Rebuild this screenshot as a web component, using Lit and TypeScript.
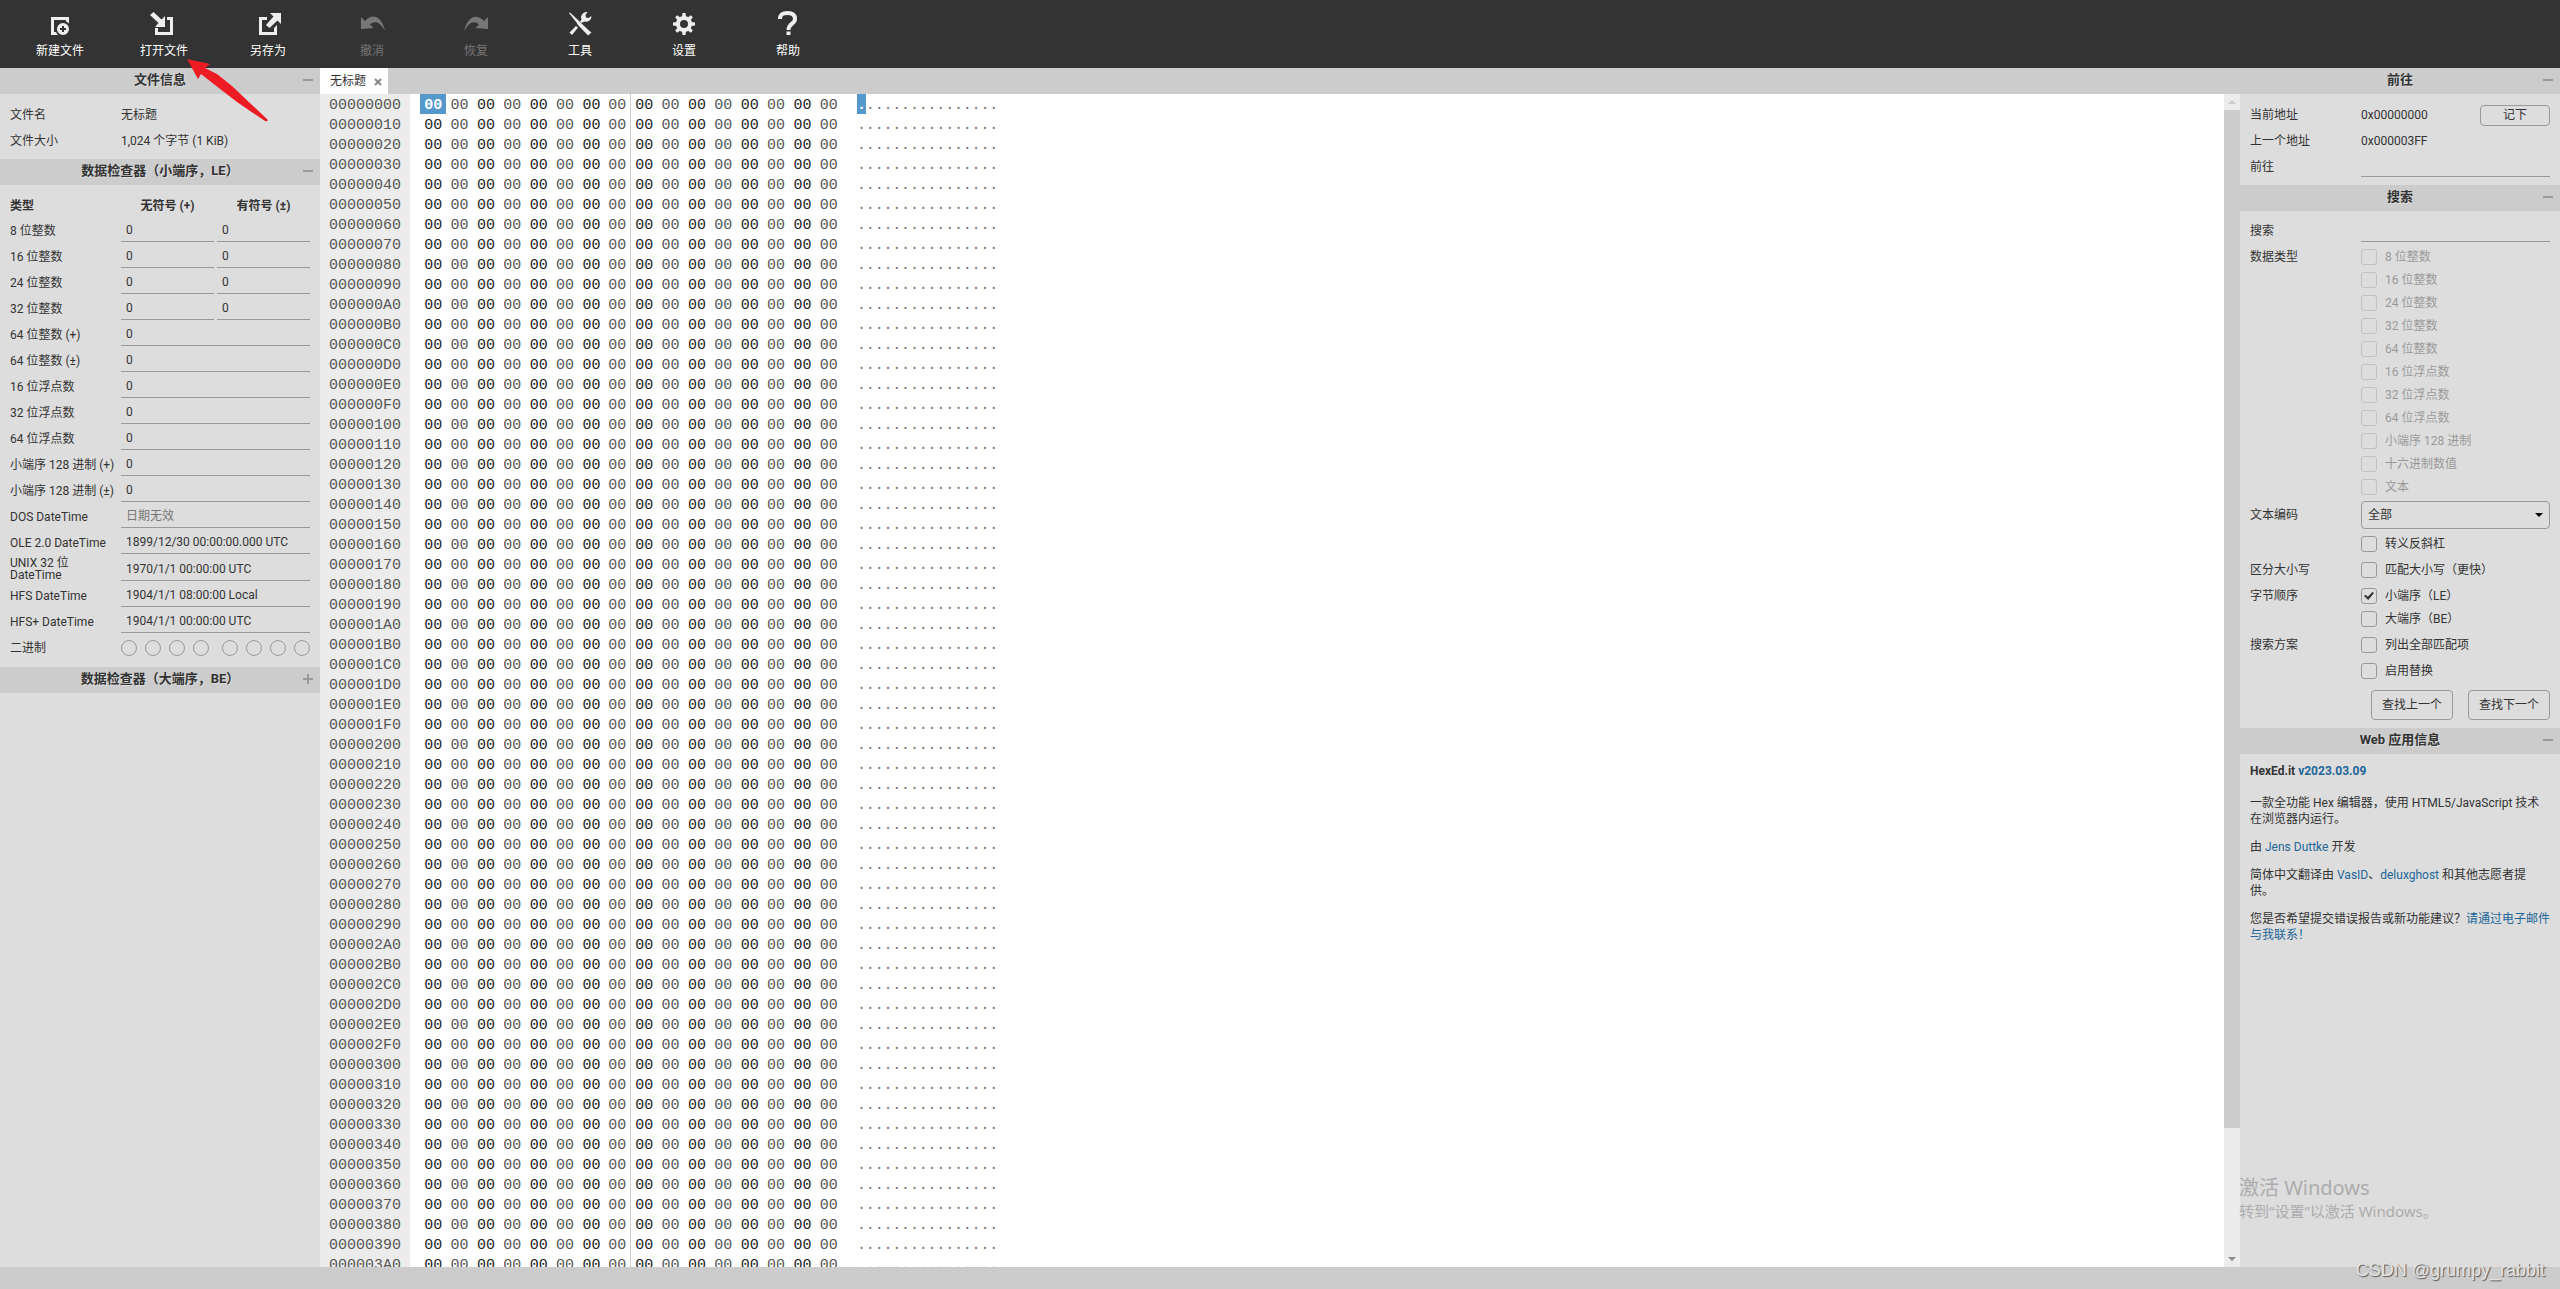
import { LitElement, html, svg, css, nothing, type TemplateResult } from "lit";
import { customElement, property } from "lit/decorators.js";
import { classMap } from "lit/directives/class-map.js";

/* ---------- shared styles ---------- */

const base = css`
  *,
  *::before,
  *::after {
    box-sizing: border-box;
  }
  button,
  input,
  select {
    font: inherit;
    color: inherit;
    margin: 0;
  }
  a {
    color: #269;
    text-decoration: none;
  }
`;

const fields = css`
  .line {
    display: block;
    width: 100%;
    height: 23px;
    padding: 0 5px;
    border: 0;
    border-bottom: 1px solid #999;
    border-radius: 0;
    background: transparent;
    outline: none;
  }
  .line::placeholder {
    color: #777;
    opacity: 1;
  }
  .box {
    appearance: none;
    flex: none;
    width: 16px;
    height: 16px;
    border: 1px solid #999;
    border-radius: 3px;
    background: transparent;
    display: grid;
    place-items: center;
  }
  .box:checked::before {
    content: "";
    width: 10px;
    height: 8px;
    background: #333;
    clip-path: polygon(0 50%, 16% 34%, 38% 58%, 84% 0, 100% 14%, 42% 100%);
  }
  .box.round {
    border-radius: 50%;
  }
`;

/* ---------- icons ---------- */

const icons: Record<string, TemplateResult> = {
  create: svg`
    <path d="M3 5h18v6.500a8 8 0 0 0-3-2V8H6v12h2a8 8 0 0 0 2 3H3z"/>
    <path fill-rule="evenodd" d="M15 11a6 6 0 1 1 0 12a6 6 0 1 1 0-12zM14 14v2h-2v2h2v2h2v-2h2v-2h-2v-2z"/>`,
  open: svg`
    <path d="M15 5h6v18H3v-7h3v4h12V8h-3z"/>
    <path d="M-2 3L1.500 0L9.500 7.500L13 4v11H3l3.500-4z"/>`,
  save: svg`
    <path d="M3 5h8v3H6v12h12v-4l3-3v10H3z"/>
    <path d="M14 1h11v11l-3.500-3.500L13.500 16L10 13l7.500-8.500z"/>`,
  undo: svg`<path d="M1 5L5 9C11 2 21 2 25 18.500C20 10 15 8 10 12.500L13.500 16L1 17z"/>`,
  redo: svg`<path d="M24 5L20 9C14 2 4 2 0 19.500C5 10 10 8 15 12.500L11.500 16L24 17z"/>`,
  tools: svg`
    <path d="M1 1L2 .500L10.500 8.500L13 11L21.500 19L23.500 20.500L20 23.500L10 13L8.500 10.500z"/>
    <path d="M10 15.500L4 23L1.500 20.500L8 14zM13.500 11L12 9.500L13.500 7.500A5.500 5.500 0 0 1 19.500 0L17.500 3L18 5.500L20.500 6L23.500 4A5.500 5.500 0 0 1 16.500 9.500z"/>`,
  settings: svg`
    <path fill-rule="evenodd" d="M12 4a8 8 0 1 1 0 16a8 8 0 1 1 0-16zM12 8a4 4 0 1 0 0 8a4 4 0 1 0 0-8z"/>
    ${[0, 45, 90, 135, 180, 225, 270, 315].map(
      (a) => svg`<path transform="rotate(${a} 12 12)" d="M10 5L10.500 1h3L14 5z"/>`
    )}`,
  help: svg`
    <path fill="none" stroke="currentColor" stroke-width="4" d="M4 7C4 2 7 1 11.500 1C16 1 19 3 19 7C19 12 12.500 11.500 12.500 18"/>
    <path d="M10.500 19.500h4v3.500h-4z"/>`,
};

/* ---------- toolbar ---------- */

const TOOLS = [
  { icon: "create", text: "新建文件" },
  { icon: "open", text: "打开文件" },
  { icon: "save", text: "另存为" },
  { icon: "undo", text: "撤消", disabled: true },
  { icon: "redo", text: "恢复", disabled: true },
  { icon: "tools", text: "工具" },
  { icon: "settings", text: "设置" },
  { icon: "help", text: "帮助" },
];

@customElement("hex-toolbar")
class HexToolbar extends LitElement {
  static styles = [
    base,
    css`
      :host {
        display: block;
        background: #333;
      }
      .bar {
        display: flex;
        padding: 0 8px;
      }
      .tool {
        width: 104px;
        height: 68px;
        padding: 12px 0 0;
        display: flex;
        flex-direction: column;
        align-items: center;
        justify-content: flex-start;
        gap: 7px;
        border: 0;
        background: none;
        color: #fff;
        line-height: 16px;
      }
      .tool:disabled {
        color: #777;
      }
      .icon {
        width: 24px;
        height: 24px;
        overflow: visible;
        fill: currentColor;
        color: #eee;
      }
      .tool:disabled .icon {
        color: #777;
      }
    `,
  ];

  render() {
    return html`<nav class="bar">
      ${TOOLS.map(
        (t) => html`<button class="tool" ?disabled=${!!t.disabled}>
          <svg class="icon" viewBox="0 0 24 24" aria-hidden="true">${icons[t.icon]}</svg>
          <span>${t.text}</span>
        </button>`
      )}
    </nav>`;
  }
}

/* ---------- collapsible panel ---------- */

@customElement("hex-panel")
class HexPanel extends LitElement {
  @property() heading = "";
  @property({ type: Boolean }) collapsed = false;

  static styles = [
    base,
    css`
      :host {
        display: block;
      }
      .head {
        position: relative;
        height: 26px;
        padding-bottom: 2px;
        display: flex;
        align-items: center;
        justify-content: center;
        background: #ccc;
      }
      .title {
        margin: 0;
        font-size: 13px;
        line-height: 24px;
        font-weight: 700;
        text-shadow: 1px 1px 0 #ddd;
      }
      .toggle {
        position: absolute;
        right: 0;
        top: 0;
        width: 24px;
        height: 24px;
        padding: 0;
        border: 0;
        background: none;
      }
      .toggle::before,
      .toggle.plus::after {
        content: "";
        position: absolute;
        left: 7px;
        top: 11px;
        width: 10px;
        height: 2px;
        background: #999;
      }
      .toggle.plus::after {
        transform: rotate(90deg);
      }
      .body {
        padding: 8px 10px 5px;
      }
    `,
  ];

  render() {
    return html`
      <header class="head">
        <h2 class="title">${this.heading}</h2>
        <button
          class=${classMap({ toggle: true, plus: this.collapsed })}
          aria-label=${this.heading}
          aria-expanded=${this.collapsed ? "false" : "true"}
          @click=${() => (this.collapsed = !this.collapsed)}
        ></button>
      </header>
      ${this.collapsed ? nothing : html`<div class="body"><slot></slot></div>`}
    `;
  }
}

/* ---------- left side ---------- */

const PAIRS = ["8 位整数", "16 位整数", "24 位整数", "32 位整数"];

const SINGLES: { name: string; value?: string; hint?: string }[] = [
  { name: "64 位整数 (+)", value: "0" },
  { name: "64 位整数 (±)", value: "0" },
  { name: "16 位浮点数", value: "0" },
  { name: "32 位浮点数", value: "0" },
  { name: "64 位浮点数", value: "0" },
  { name: "小端序 128 进制 (+)", value: "0" },
  { name: "小端序 128 进制 (±)", value: "0" },
  { name: "DOS DateTime", hint: "日期无效" },
  { name: "OLE 2.0 DateTime", value: "1899/12/30 00:00:00.000 UTC" },
  { name: "UNIX 32 位 DateTime", value: "1970/1/1 00:00:00 UTC" },
  { name: "HFS DateTime", value: "1904/1/1 08:00:00 Local" },
  { name: "HFS+ DateTime", value: "1904/1/1 00:00:00 UTC" },
];

@customElement("hex-inspector")
class HexInspector extends LitElement {
  static styles = [
    base,
    fields,
    css`
      :host {
        display: block;
      }
      .info {
        margin: 0;
        display: grid;
        grid-template-columns: 111px 1fr;
        line-height: 26px;
      }
      .info dd {
        margin: 0;
      }
      .grid {
        width: 100%;
        table-layout: fixed;
        border-collapse: collapse;
      }
      .grid tr {
        height: 26px;
      }
      .grid th,
      .grid td {
        padding: 0 0 3px;
        text-align: left;
        font-weight: 400;
        line-height: 12px;
        vertical-align: middle;
      }
      .grid thead th {
        padding: 0;
        font-weight: 700;
        text-align: center;
      }
      .grid thead th:first-child {
        text-align: left;
      }
      .names {
        width: 111px;
      }
      .gap {
        width: 3px;
      }
      .bits {
        display: flex;
        justify-content: space-between;
      }
      .nibble {
        display: flex;
        gap: 8px;
      }
    `,
  ];

  render() {
    return html`
      <hex-panel heading="文件信息">
        <dl class="info">
          <dt>文件名</dt>
          <dd>无标题</dd>
          <dt>文件大小</dt>
          <dd>1,024 个字节 (1 KiB)</dd>
        </dl>
      </hex-panel>
      <hex-panel heading="数据检查器（小端序，LE）">
        <table class="grid">
          <colgroup>
            <col class="names" />
            <col />
            <col class="gap" />
            <col />
          </colgroup>
          <thead>
            <tr>
              <th>类型</th>
              <th>无符号 (+)</th>
              <th></th>
              <th>有符号 (±)</th>
            </tr>
          </thead>
          <tbody>
            ${PAIRS.map(
              (name, i) => html`<tr>
                <th><label for="pair${i}">${name}</label></th>
                <td><input class="line" id="pair${i}" .value=${"0"} /></td>
                <td></td>
                <td><input class="line" aria-label="${name} (±)" .value=${"0"} /></td>
              </tr>`
            )}
            ${SINGLES.map(
              (row, i) => html`<tr>
                <th><label for="single${i}">${row.name}</label></th>
                <td colspan="3">
                  <input
                    class="line"
                    id="single${i}"
                    .value=${row.value ?? ""}
                    placeholder=${row.hint ?? ""}
                  />
                </td>
              </tr>`
            )}
            <tr>
              <th>二进制</th>
              <td colspan="3">
                <div class="bits">
                  ${[7, 3].map(
                    (top) => html`<div class="nibble">
                      ${[0, 1, 2, 3].map(
                        (n) => html`<input
                          class="box round"
                          type="checkbox"
                          aria-label="二进制 ${top - n}"
                        />`
                      )}
                    </div>`
                  )}
                </div>
              </td>
            </tr>
          </tbody>
        </table>
      </hex-panel>
      <hex-panel heading="数据检查器（大端序，BE）" collapsed></hex-panel>
    `;
  }
}

/* ---------- editor ---------- */

const ROWS = Array.from({ length: 64 }, (_, i) =>
  (i * 16).toString(16).toUpperCase().padStart(8, "0")
);
const COLUMNS = Array.from({ length: 16 }, (_, i) => i);

@customElement("hex-editor")
class HexEditor extends LitElement {
  static styles = [
    base,
    css`
      :host {
        display: flex;
        flex-direction: column;
        min-width: 0;
        min-height: 0;
      }
      .tabs {
        flex: none;
        display: flex;
        height: 26px;
        background: #ccc;
      }
      .tab {
        display: flex;
        align-items: center;
        gap: 8px;
        padding: 0 6px 0 10px;
        background: #fff;
      }
      .close {
        width: 8px;
        height: 8px;
        margin-top: 2px;
        padding: 0;
        border: 0;
        background: none;
        display: grid;
      }
      .close svg {
        width: 8px;
        height: 8px;
        stroke: #888;
        stroke-width: 2;
      }
      .view {
        flex: 1;
        min-height: 0;
        display: flex;
        background: #fff;
      }
      .scroller {
        flex: 1;
        min-width: 0;
        overflow: hidden;
      }
      .dump {
        display: block;
        font-family: "Liberation Mono", monospace;
        font-size: 15px;
        line-height: 23px;
      }
      .dump tbody {
        display: block;
      }
      .row {
        display: flex;
        height: 20px;
      }
      .row th,
      .row td {
        display: block;
        height: 20px;
        padding: 0;
        text-align: center;
      }
      .row .address {
        width: 90px;
        margin-right: 10px;
        background: #ececec;
        color: #555;
        font-weight: 400;
      }
      .byte {
        width: calc(422px / 16);
        color: #222;
      }
      .byte.odd {
        color: #555;
      }
      .byte.middle {
        border-right: 1px solid #ccc;
      }
      .byte.last {
        margin-right: 15px;
      }
      .char {
        width: calc(141px / 16);
        color: #777;
      }
      .row .current {
        background: #59c;
        color: #fff;
        font-weight: 700;
      }
      .bar {
        flex: none;
        width: 16px;
        display: flex;
        flex-direction: column;
        background: #ececec;
      }
      .arrow {
        width: 16px;
        height: 16px;
        fill: #ccc;
      }
      .arrow.down {
        fill: #888;
      }
      .thumb {
        flex: 83 1 0;
        background: #ccc;
      }
      .rest {
        flex: 10 1 0;
      }
    `,
  ];

  render() {
    return html`
      <div class="tabs">
        <div class="tab">
          <span>无标题</span>
          <button class="close" aria-label="关闭">
            <svg viewBox="0 0 8 8" aria-hidden="true"><path d="M1 1L7 7M7 1L1 7" /></svg>
          </button>
        </div>
      </div>
      <div class="view">
        <div class="scroller">
          <table class="dump">
            <tbody>
              ${ROWS.map(
                (address, r) => html`<tr class="row">
                  <th class="address">${address}</th>
                  ${COLUMNS.map(
                    (c) => html`<td
                      class=${classMap({
                        byte: true,
                        odd: c % 2 === 1,
                        middle: c === 7,
                        last: c === 15,
                        current: r === 0 && c === 0,
                      })}
                    >00</td>`
                  )}
                  ${COLUMNS.map(
                    (c) => html`<td
                      class=${classMap({ char: true, current: r === 0 && c === 0 })}
                    >.</td>`
                  )}
                </tr>`
              )}
            </tbody>
          </table>
        </div>
        <div class="bar" aria-hidden="true">
          <svg class="arrow" viewBox="0 0 16 16"><path d="M4 10h8L8 6z" /></svg>
          <div class="thumb"></div>
          <div class="rest"></div>
          <svg class="arrow down" viewBox="0 0 16 16"><path d="M4 6h8L8 10z" /></svg>
        </div>
      </div>
    `;
  }
}

/* ---------- right side ---------- */

const DATA_TYPES = [
  "8 位整数",
  "16 位整数",
  "24 位整数",
  "32 位整数",
  "64 位整数",
  "16 位浮点数",
  "32 位浮点数",
  "64 位浮点数",
  "小端序 128 进制",
  "十六进制数值",
  "文本",
];

@customElement("hex-search")
class HexSearch extends LitElement {
  static styles = [
    base,
    fields,
    css`
      :host {
        display: block;
      }
      .row {
        display: grid;
        grid-template-columns: 111px 1fr;
        grid-auto-rows: minmax(26px, auto);
      }
      .name {
        line-height: 26px;
      }
      .row > .line {
        align-self: start;
      }
      .name.option {
        line-height: 24px;
      }
      .name.tall {
        line-height: 28px;
      }
      .value {
        display: flex;
        justify-content: space-between;
        align-items: center;
        line-height: 26px;
      }
      .choices {
        display: flex;
        flex-direction: column;
        gap: 7px;
        padding: 4px 0 6px;
      }
      .choice {
        display: flex;
        align-items: center;
        gap: 8px;
        height: 16px;
        line-height: 16px;
      }
      .choice.off {
        opacity: 0.4;
      }
      .push {
        padding: 0;
        border: 1px solid #999;
        border-radius: 4px;
        background: transparent;
      }
      .note {
        width: 70px;
        height: 21px;
        line-height: 19px;
      }
      .find {
        width: 82px;
        height: 30px;
      }
      .actions {
        display: flex;
        justify-content: flex-end;
        gap: 15px;
        padding: 5px 0 3px;
      }
      .pick {
        display: grid;
        align-items: center;
        padding-bottom: 3px;
      }
      .pick > * {
        grid-area: 1 / 1;
      }
      .select {
        appearance: none;
        width: 100%;
        height: 28px;
        padding: 0 20px 0 6px;
        border: 1px solid #999;
        border-radius: 4px;
        background: transparent;
      }
      .caret {
        justify-self: end;
        width: 8px;
        height: 4px;
        margin-right: 7px;
        pointer-events: none;
      }
      .about {
        margin-right: -1px;
        line-height: 16px;
      }
      .about p {
        margin: 0 0 12px;
      }
      .about .version {
        margin: 1px 0 16px;
        font-weight: 700;
      }
    `,
  ];

  private choice(text: string, options: { off?: boolean; on?: boolean } = {}) {
    return html`<label class=${classMap({ choice: true, off: !!options.off })}>
      <input class="box" type="checkbox" ?disabled=${!!options.off} .checked=${!!options.on} />
      <span>${text}</span>
    </label>`;
  }

  render() {
    return html`
      <hex-panel heading="前往">
        <div class="row">
          <span class="name">当前地址</span>
          <span class="value">0x00000000 <button class="push note">记下</button></span>
        </div>
        <div class="row">
          <span class="name">上一个地址</span>
          <span class="value">0x000003FF</span>
        </div>
        <div class="row">
          <label class="name" for="goto">前往</label>
          <input class="line" id="goto" />
        </div>
      </hex-panel>
      <hex-panel heading="搜索">
        <div class="row">
          <label class="name option" for="term">搜索</label>
          <input class="line" id="term" />
        </div>
        <div class="row">
          <span class="name option">数据类型</span>
          <div class="choices">${DATA_TYPES.map((t) => this.choice(t, { off: true }))}</div>
        </div>
        <div class="row">
          <label class="name tall" for="encoding">文本编码</label>
          <div class="pick">
            <select class="select" id="encoding">
              <option>全部</option>
            </select>
            <svg class="caret" viewBox="0 0 8 4" aria-hidden="true"><path d="M0 0h8L4 4z" /></svg>
          </div>
        </div>
        <div class="row">
          <span></span>
          <div class="choices">${this.choice("转义反斜杠")}</div>
        </div>
        <div class="row">
          <span class="name option">区分大小写</span>
          <div class="choices">${this.choice("匹配大小写（更快）")}</div>
        </div>
        <div class="row">
          <span class="name option">字节顺序</span>
          <div class="choices">
            ${this.choice("小端序（LE）", { on: true })} ${this.choice("大端序（BE）")}
          </div>
        </div>
        <div class="row">
          <span class="name option">搜索方案</span>
          <div class="choices">${this.choice("列出全部匹配项")}</div>
        </div>
        <div class="row">
          <span></span>
          <div class="choices">${this.choice("启用替换")}</div>
        </div>
        <div class="actions">
          <button class="push find">查找上一个</button>
          <button class="push find">查找下一个</button>
        </div>
      </hex-panel>
      <hex-panel heading="Web 应用信息">
        <div class="about">
          <p class="version">HexEd.it <a href="#version">v2023.03.09</a></p>
          <p>一款全功能 Hex 编辑器，使用 HTML5/JavaScript 技术<br />在浏览器内运行。</p>
          <p>由 <a href="#author">Jens Duttke</a> 开发</p>
          <p>
            简体中文翻译由 <a href="#vasid">VasID</a>、<a href="#deluxghost">deluxghost</a>
            和其他志愿者提<br />供。
          </p>
          <p>您是否希望提交错误报告或新功能建议？<a href="#contact">请通过电子邮件与我联系！</a></p>
        </div>
      </hex-panel>
    `;
  }
}

/* ---------- page ---------- */

@customElement("app-root")
class AppRoot extends LitElement {
  static styles = [
    base,
    css`
      :host {
        display: flex;
        flex-direction: column;
        position: relative;
        height: 100vh;
        overflow: hidden;
        background: #ddd;
        color: #333;
        font-family: Roboto, "Noto Sans CJK SC", sans-serif;
        font-size: 12px;
        line-height: 16px;
      }
      .main {
        flex: 1;
        min-height: 0;
        display: grid;
        grid-template-columns: 320px minmax(0, 1fr) 320px;
        grid-template-rows: minmax(0, 1fr);
      }
      .side {
        overflow: hidden;
      }
      .status {
        flex: none;
        height: 22px;
        background: #ccc;
      }
      .pointer {
        position: absolute;
        left: 187px;
        top: 59px;
        width: 82px;
        height: 64px;
        fill: #ed1c24;
        pointer-events: none;
      }
      .activate {
        position: absolute;
        right: 120px;
        bottom: 68px;
        width: 201px;
        color: #acacac;
        font-family: "Noto Sans", "Noto Sans CJK SC", sans-serif;
        font-size: 15px;
        line-height: 20px;
        white-space: nowrap;
        pointer-events: none;
      }
      .activate strong {
        display: block;
        font-size: 20px;
        line-height: 26px;
        font-weight: 400;
      }
      .credit {
        position: absolute;
        right: 15px;
        bottom: 8px;
        color: #e4e4e4;
        font-family: "Liberation Sans", sans-serif;
        font-size: 18px;
        line-height: 22px;
        text-shadow: 1px 1px 1px #555;
        pointer-events: none;
      }
    `,
  ];

  render() {
    return html`
      <hex-toolbar></hex-toolbar>
      <main class="main">
        <hex-inspector class="side"></hex-inspector>
        <hex-editor></hex-editor>
        <hex-search class="side"></hex-search>
      </main>
      <footer class="status"></footer>
      <svg class="pointer" viewBox="0 0 82 64" aria-hidden="true">
        <path d="M0 0L23 5L18 9L30 15L45 27L81 61Q80 63 78 62L50 43L28 26L14 15L11 20z" />
      </svg>
      <div class="activate">
        <strong>激活 Windows</strong>
        转到“设置”以激活 Windows。
      </div>
      <div class="credit">CSDN @grumpy_rabbit</div>
    `;
  }
}
